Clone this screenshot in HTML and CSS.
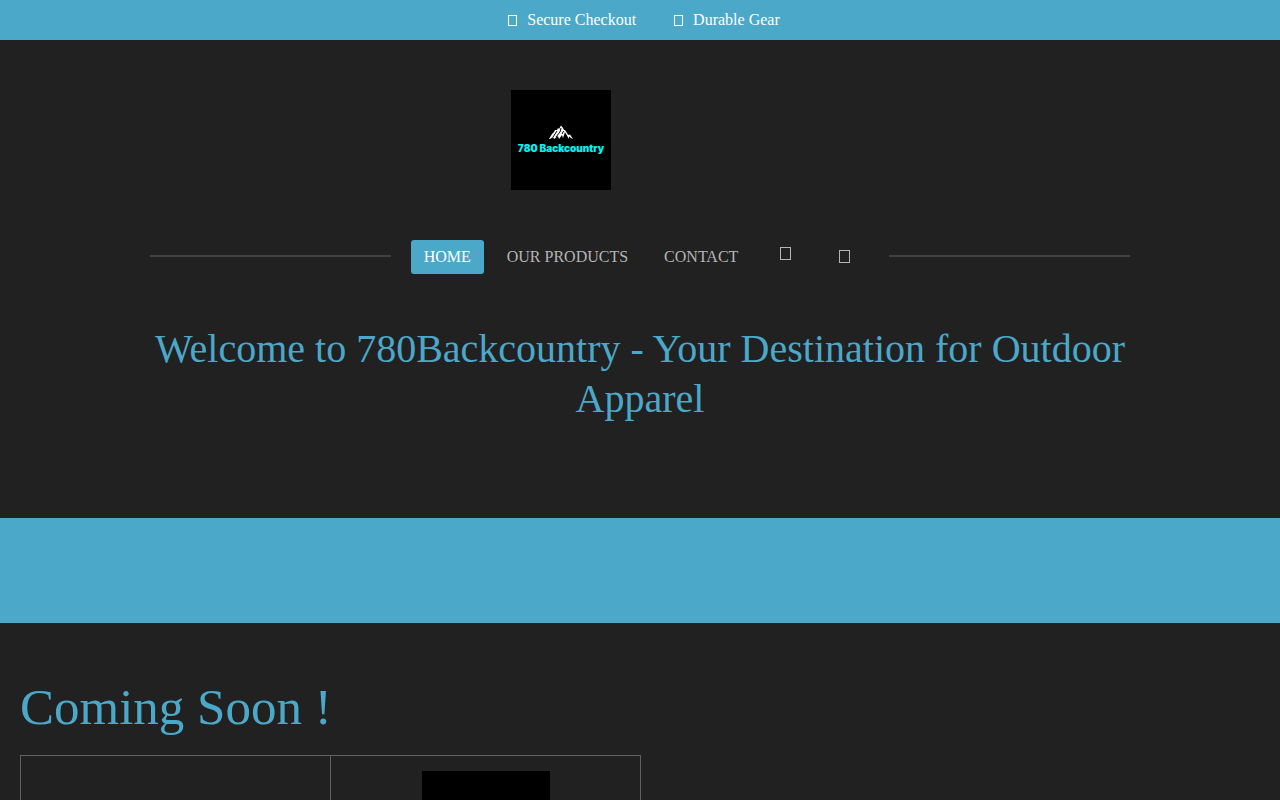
FILE: index.html
```html
<!DOCTYPE html>
<html lang="en">
    <head>
        <meta charset="utf-8">
        <title>780 Backcountry</title>
        <link rel="stylesheet" href="styles.css">
    </head>
    <body>
        <div class="top-bar">
            <span class="perk"><i class="glyph"></i>Secure Checkout</span>
            <span class="perk"><i class="glyph"></i>Durable Gear</span>
        </div>

        <header class="header">
            <a class="logo" href="#" aria-label="780 Backcountry">
                <svg width="100" height="100" viewBox="0 0 100 100">
                    <rect width="100" height="100" fill="#000"/>
                    <path fill="#fff" d="M38 49 L41 44 L43 42 L44 40 L46 40 L47 38 L48 39 L50 35.5 L52 38 L53 40 L54 40 L56 43 L57 45 L59 44.5 L62 49 L60 48 L58 46.5 L58 49 L55 44 L54 42 L52 48 L51 45 L48 49 L47 46 L43 49 L42 47 L39 49 Z"/>
                    <path stroke="#000" fill="none" d="M46 41 L42 47 M50 38 L49 42 L45 47 M52.5 41 L51 44"/>
                    <text class="logo-text" x="50" y="62" text-anchor="middle">780 Backcountry</text>
                </svg>
            </a>

            <div class="nav-row">
                <nav class="nav">
                    <a class="nav-link active" href="#">HOME</a>
                    <a class="nav-link" href="#">OUR PRODUCTS</a>
                    <a class="nav-link" href="#">CONTACT</a>
                    <a class="nav-icon raised" href="#" aria-label="Account"><i class="glyph large"></i></a>
                    <a class="nav-icon" href="#" aria-label="Cart"><i class="glyph large"></i></a>
                </nav>
            </div>

            <h1 class="welcome">Welcome to 780Backcountry - Your Destination for Outdoor Apparel</h1>
        </header>

        <div class="band"></div>

        <main class="coming">
            <h2 class="coming-title">Coming Soon !</h2>
            <table class="products">
                <tr>
                    <td></td>
                    <td><div class="product-image"></div></td>
                </tr>
            </table>
        </main>
    </body>
</html>
```
FILE: styles.css
```css
* {
  box-sizing: border-box;
}

body {
  margin: 0;
  background: #212121;
  color: #b5b5b5;
  font-family: "Liberation Serif", serif;
  font-size: 16px;
}

a {
  color: inherit;
  text-decoration: none;
}

.top-bar {
  display: flex;
  justify-content: center;
  gap: 38px;
  padding-left: 8px;
  background: #4ba8c9;
  color: #fff;
  line-height: 40px;
}

.perk {
  display: flex;
  align-items: center;
  gap: 10px;
}

.glyph {
  width: 9px;
  height: 11px;
  border: 1px solid;
}

.glyph.large {
  width: 11px;
  height: 13px;
}

.header {
  display: flex;
  flex-direction: column;
  max-width: 980px;
  margin: 0 auto;
  padding: 50px 0 94px;
}

.logo {
  align-self: center;
  height: 100px;
  margin-right: 158px;
}

.logo-text {
  fill: #00f4f4;
  font-family: Inter, sans-serif;
  font-size: 10px;
  font-weight: 900;
}

.nav-row {
  display: flex;
  align-items: center;
  gap: 20px;
  margin: 50px 0;
}

/* rules on both sides of the menu */
.nav-row::before,
.nav-row::after {
  content: "";
  flex: 1;
  height: 2px;
  margin-bottom: 2px;
  background: #414141;
}

.nav {
  display: flex;
  gap: 10px;
  line-height: 34px;
}

.nav-link {
  padding: 0 13px;
}

.nav-link.active {
  background: #4ba8c9;
  border-radius: 3px;
  color: #fff;
}

.nav-icon {
  display: flex;
  align-items: center;
  padding: 0 19px 2px;
}

.nav-icon.raised {
  padding-bottom: 8px;
}

.welcome {
  margin: 0;
  color: #4ba8c9;
  font-size: 40px;
  font-weight: normal;
  line-height: 50px;
  text-align: center;
}

.band {
  height: 105px;
  background: #4ba8c9;
}

.coming {
  padding: 54px 20px;
}

.coming-title {
  margin: 0 0 18px;
  color: #4ba8c9;
  font-size: 51px;
  font-weight: normal;
  line-height: 60px;
}

.products {
  width: calc(50% + 1px);
  border-collapse: collapse;
  table-layout: fixed;
}

.products td {
  padding: 15px;
  border: 1px solid #616161;
}

.product-image {
  width: 128px;
  height: 128px;
  margin: 0 auto;
  background: #000;
}
```
